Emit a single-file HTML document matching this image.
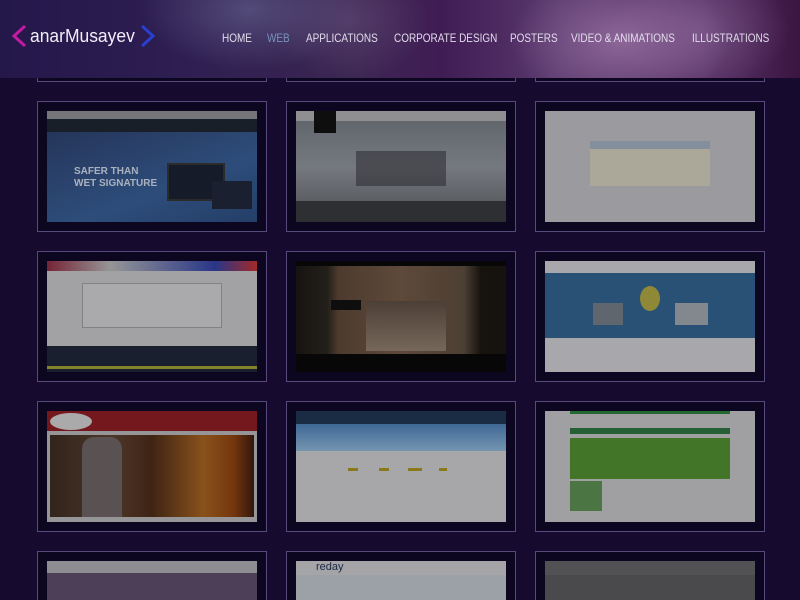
<!DOCTYPE html>
<html style="height:600px;overflow:hidden"><head><meta charset="utf-8"><style>
*{margin:0;padding:0;box-sizing:border-box}
html,body{width:800px;height:600px;overflow:hidden}
body{background:#160b2e;font-family:"Liberation Sans",sans-serif;position:relative}
.card{position:absolute;width:230px;height:131px;border:1px solid #58497c;background:#0d0620}
.th{position:absolute;left:9px;top:9px;width:210px;height:111px;overflow:hidden;filter:brightness(.85)}
.th div{position:absolute}
.last{height:49px;border-bottom:none;overflow:hidden}
.last .th{height:40px}
header{position:absolute;left:0;top:0;width:800px;height:78px;z-index:5;
background:
radial-gradient(ellipse 110px 70px at 620px 40px,rgba(150,110,160,.85),transparent),
radial-gradient(ellipse 90px 60px at 700px 30px,rgba(130,95,145,.6),transparent),
radial-gradient(ellipse 110px 60px at 250px 10px,rgba(90,85,130,.8),transparent),
radial-gradient(ellipse 80px 60px at 350px 20px,rgba(100,75,120,.6),transparent),
linear-gradient(90deg,#24174a 0%,#2f1f52 25%,#3c2652 45%,#401c55 55%,#5a3a6e 70%,#5a3468 88%,#3a1540 100%)}
.nav{position:absolute;top:31px;font-size:12px;color:#e2dcec;white-space:nowrap;transform:scaleX(.83);transform-origin:0 0}
</style></head><body>
<header>
<svg style="position:absolute;left:11px;top:25px" width="16" height="22"><polyline points="14,1 3,11 14,21" fill="none" stroke="#c21aa0" stroke-width="3"/></svg>
<div style="position:absolute;left:30px;top:26px;font-size:18px;color:#f2eef8;white-space:nowrap;transform:scaleX(.97);transform-origin:0 0">anarMusayev</div>
<svg style="position:absolute;left:140px;top:25px" width="16" height="22"><polyline points="2,1 13,11 2,21" fill="none" stroke="#2a3fd0" stroke-width="3"/></svg>
<div class="nav" style="left:222px">HOME</div>
<div class="nav" style="left:267px;color:#7892bb">WEB</div>
<div class="nav" style="left:306px">APPLICATIONS</div>
<div class="nav" style="left:394px">CORPORATE DESIGN</div>
<div class="nav" style="left:510px">POSTERS</div>
<div class="nav" style="left:571px">VIDEO &amp; ANIMATIONS</div>
<div class="nav" style="left:692px">ILLUSTRATIONS</div>
</header>

<div class="card" style="left:37px;top:0;height:82px;border-top:none"></div>
<div class="card" style="left:286px;top:0;height:82px;border-top:none"></div>
<div class="card" style="left:535px;top:0;height:82px;border-top:none"></div>

<!-- row 1 -->
<div class="card" style="left:37px;top:101px"><div class="th" style="background:#2a4676">
<div style="left:0;top:0;width:210px;height:8px;background:#8a8a90"></div>
<div style="left:0;top:8px;width:210px;height:13px;background:#1d2530"></div>
<div style="left:0;top:21px;width:210px;height:90px;background:linear-gradient(160deg,#2c3f6a,#355a90 60%,#2a4a7a)"></div>
<div style="left:27px;top:55px;font-size:10px;font-weight:bold;color:#c8d0e0;line-height:12px">SAFER THAN<br>WET SIGNATURE</div>
<div style="left:120px;top:52px;width:58px;height:38px;background:#1a2030;border:2px solid #333"></div>
<div style="left:165px;top:70px;width:40px;height:28px;background:#1e2638"></div>
</div></div>
<div class="card" style="left:286px;top:101px"><div class="th" style="background:linear-gradient(180deg,#6e747c,#8a8e96 50%,#5a5c60)">
<div style="left:0;top:0;width:210px;height:10px;background:#a8a8ac"></div>
<div style="left:18px;top:0;width:22px;height:22px;background:#111"></div>
<div style="left:60px;top:40px;width:90px;height:35px;background:rgba(40,40,45,.5)"></div>
<div style="left:0;top:90px;width:210px;height:21px;background:#35373c"></div>
</div></div>
<div class="card" style="left:535px;top:101px"><div class="th" style="background:#b5b5bb">
<div style="left:45px;top:30px;width:120px;height:45px;background:#c9c4b4"></div>
<div style="left:45px;top:30px;width:120px;height:8px;background:#9aa8b8"></div>
</div></div>

<!-- row 2 -->
<div class="card" style="left:37px;top:251px"><div class="th" style="background:#bebec2">
<div style="left:0;top:0;width:210px;height:10px;background:linear-gradient(90deg,#8a2a40,#b0b0b0 30%,#3040a0 80%,#c03030)"></div>
<div style="left:35px;top:22px;width:140px;height:45px;background:#c8c8cc;border:1px solid #999"></div>
<div style="left:0;top:85px;width:210px;height:26px;background:#1e2438"></div>
<div style="left:0;top:105px;width:210px;height:3px;background:#9a9a30"></div>
</div></div>
<div class="card" style="left:286px;top:251px"><div class="th" style="background:#080808">
<div style="left:0;top:5px;width:210px;height:88px;background:linear-gradient(90deg,#1a1612 0%,#2a2520 15%,#5a4536 20%,#6e5644 50%,#5a4a3c 80%,#1a1612 88%)"></div>
<div style="left:70px;top:40px;width:80px;height:50px;background:linear-gradient(180deg,#5a4a40,#8a7a6a)"></div>
<div style="left:35px;top:39px;width:30px;height:10px;background:#111"></div>
</div></div>
<div class="card" style="left:535px;top:251px"><div class="th" style="background:#c6c6ca">
<div style="left:0;top:12px;width:210px;height:65px;background:#2f5f8a"></div>
<div style="left:95px;top:25px;width:20px;height:25px;border-radius:50%;background:#a8a040"></div>
<div style="left:48px;top:42px;width:30px;height:22px;background:#707880"></div>
<div style="left:130px;top:42px;width:33px;height:22px;background:#9aa0a8"></div>
</div></div>

<!-- row 3 -->
<div class="card" style="left:37px;top:401px"><div class="th" style="background:#b0b0b4">
<div style="left:0;top:0;width:210px;height:20px;background:#8a1c22"></div>
<div style="left:3px;top:2px;width:42px;height:17px;border-radius:50%;background:#c8c8c8"></div>
<div style="left:3px;top:24px;width:204px;height:82px;background:linear-gradient(90deg,#3a2a20,#5a4030 30%,#4a2a18 50%,#a06020 75%,#8a4010 90%,#3a1a10)"></div>
<div style="left:35px;top:26px;width:40px;height:80px;background:#6a6060;border-radius:12px 12px 0 0"></div>
</div></div>
<div class="card" style="left:286px;top:401px"><div class="th" style="background:#c4c4c8">
<div style="left:0;top:0;width:210px;height:13px;background:#1e3450"></div>
<div style="left:0;top:13px;width:210px;height:27px;background:linear-gradient(180deg,#4a7ab0,#8ab0d0)"></div>
<div style="left:52px;top:57px;width:10px;height:3px;background:#a09020"></div>
<div style="left:83px;top:57px;width:10px;height:3px;background:#a09020"></div>
<div style="left:112px;top:57px;width:14px;height:3px;background:#a09020"></div>
<div style="left:143px;top:57px;width:8px;height:3px;background:#a09020"></div>
</div></div>
<div class="card" style="left:535px;top:401px"><div class="th" style="background:#bcbcc0">
<div style="left:25px;top:0;width:160px;height:3px;background:#2a7a3a"></div>
<div style="left:25px;top:17px;width:160px;height:6px;background:#2a7040"></div>
<div style="left:25px;top:27px;width:160px;height:41px;background:#4f8a30"></div>
<div style="left:25px;top:70px;width:32px;height:30px;background:#5a8a50"></div>
</div></div>

<!-- row 4 -->
<div class="card last" style="left:37px;top:551px"><div class="th" style="background:#5a4a66">
<div style="left:0;top:0;width:210px;height:12px;background:#a6a6ac"></div>
</div></div>
<div class="card last" style="left:286px;top:551px"><div class="th" style="background:#b8bcc4">
<div style="left:0;top:0;width:210px;height:14px;background:#c2c2c6"></div>
<div style="left:20px;top:0;font-size:11px;color:#223050">reday</div>
</div></div>
<div class="card last" style="left:535px;top:551px"><div class="th" style="background:#57575b">
<div style="left:0;top:0;width:210px;height:14px;background:#606064"></div>
</div></div>
</body></html>
